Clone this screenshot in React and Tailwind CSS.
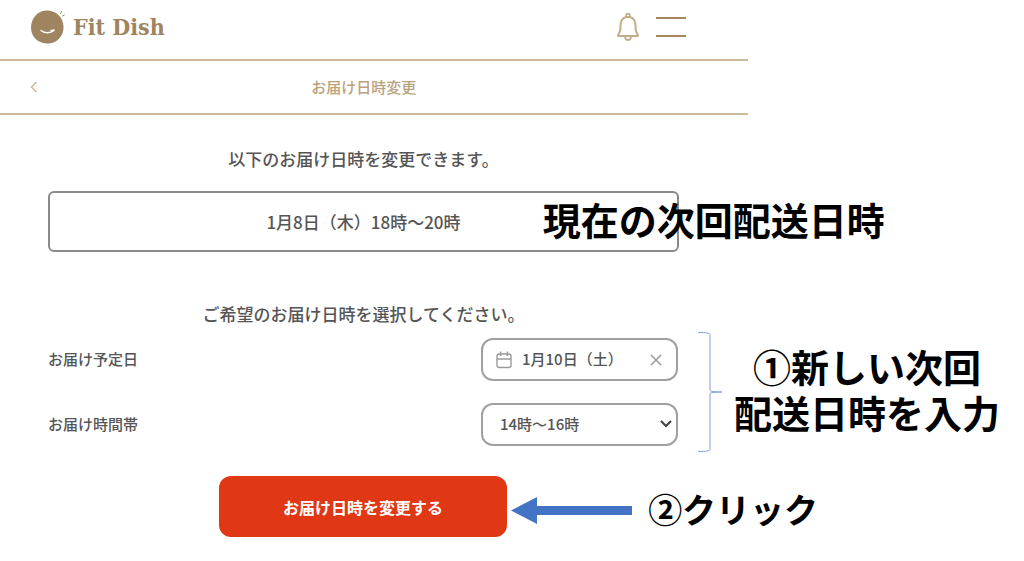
import React, { useState } from "react";

const Logo = () => (
  <a href="#" className="flex items-center gap-2 text-[#9f8460]">
    <svg width="35" height="36" viewBox="0 0 35 36" fill="none" aria-hidden="true">
      <path
        d="M17 1.500C26 1.500 33 8 33.500 17.500c.4 9.500-6.500 17-16 17S1 28 1 18.500 8 1.500 17 1.500Z"
        fill="currentColor"
      />
      <path
        d="M11 21.500c3 3 9.500 3 13 0M21 21.500l3-.5"
        stroke="#fff"
        strokeWidth="1.400"
        strokeLinecap="round"
      />
      <path
        d="m30.500 4.500 1.200-2M32.500 7l1.800-1"
        stroke="currentColor"
        strokeWidth="1"
        strokeLinecap="round"
      />
    </svg>
    <span className="font-['DejaVu_Serif_Condensed','DejaVu_Serif',serif] text-[23px] font-bold leading-8 whitespace-nowrap">
      Fit Dish
    </span>
  </a>
);

const BellIcon = () => (
  <svg width="24" height="30" viewBox="0 0 24 30" fill="none" stroke="#c3ad87" aria-hidden="true">
    <path
      d="M2 24h20c.5-2-1.800-3-2.200-5.500-.5-3 .2-5.500-.8-8.500-1-3.500-3.800-5-7-5s-6 1.500-7 5c-1 3-.3 5.500-.8 8.500C3.800 21 1.500 22 2 24Z"
      strokeWidth="2"
      strokeLinejoin="round"
    />
    <path d="M10.200 5V3.500a1.800 1.800 0 0 1 3.600 0V5M9 25c.3 2 1.500 3 3 3s2.700-1 3-3" strokeWidth="1.800" />
  </svg>
);

const CalendarIcon = () => (
  <svg width="16" height="18" viewBox="0 0 16 18" fill="none" stroke="#9a9a9a" aria-hidden="true">
    <rect x="1" y="3" width="14" height="13.500" rx="2" strokeWidth="1.400" />
    <path d="M1 8h14M4.500.5V5M11.500.5V5" strokeWidth="1.400" />
  </svg>
);

const Bracket = () => (
  <svg
    width="24"
    height="120"
    viewBox="0 0 24 120"
    fill="none"
    stroke="#7f9fd8"
    className="ml-5 shrink-0"
    aria-hidden="true"
  >
    <path d="M0 .6c8 0 12 .4 12 2V58c0 1.500 4 2 12 2-8 0-12 .5-12 2v55.400c0 1.600-4 2-12 2" />
  </svg>
);

const App = () => {
  const [date, setDate] = useState("1月10日（土）");
  const [time, setTime] = useState("14時～16時");

  return (
    <main className="bg-white font-['Noto_Sans_CJK_JP',sans-serif] font-medium text-[#555555]">
      {/* Header */}
      <header className="w-[73%]">
        <div className="flex h-[61px] items-center justify-between border-b-2 border-[#cdbb9c] pb-1.5 pl-[30px] pr-[62px]">
          <Logo />
          <div className="flex items-center gap-4">
            <button type="button" aria-label="お知らせ">
              <BellIcon />
            </button>
            <button type="button" aria-label="メニュー" className="flex w-[30px] flex-col gap-4">
              <span className="h-0.5 bg-[#a58860]"></span>
              <span className="h-0.5 bg-[#a58860]"></span>
            </button>
          </div>
        </div>

        <div className="flex h-[54px] items-center border-b-2 border-[#cdbb9c] pl-[30px] pr-[58px]">
          <a href="#" aria-label="戻る">
            <svg width="8" height="12" viewBox="0 0 8 12" fill="none" stroke="#cbb994" strokeWidth="1.500">
              <path d="M6.500 1 1.500 6l5 5" />
            </svg>
          </a>
          <h1 className="flex-1 text-center text-[15px] leading-6 text-[#b9a27c]">
            お届け日時変更
          </h1>
        </div>
      </header>

      {/* Current delivery */}
      <p className="w-[71%] pt-8 text-center text-[17px] leading-6">
        以下のお届け日時を変更できます。
      </p>
      <div className="relative mt-5">
        <div className="w-[66.3%] pl-12">
          <p className="flex h-[61px] items-center justify-center rounded-md border-2 border-[#8a8a8a] text-[17px]">
            1月8日（木）18時～20時
          </p>
        </div>
        <p className="absolute inset-y-0 left-[53%] flex items-center whitespace-nowrap font-['Liberation_Sans','Noto_Sans_CJK_JP',sans-serif] text-[38px] font-bold leading-[46px] text-black">
          現在の次回配送日時
        </p>
      </div>

      {/* New delivery */}
      <form onSubmit={(e) => e.preventDefault()}>
        <p className="mt-[50px] w-[71%] text-center text-[17px] leading-6">
          ご希望のお届け日時を選択してください。
        </p>

        <div className="mt-1.5 flex items-center">
          <div className="flex w-[66.3%] flex-col gap-[22px] pl-12 text-[15px]">
            <div className="flex items-center justify-between">
              <label htmlFor="date">お届け予定日</label>
              <div className="flex h-[43px] w-[197px] items-center gap-2.5 rounded-xl border-2 border-[#a0a0a0] pl-[13px] pr-2.5">
                <CalendarIcon />
                <input
                  id="date"
                  type="text"
                  value={date}
                  onChange={(e) => setDate(e.target.value)}
                  className="min-w-0 flex-1 outline-none"
                />
                <button type="button" aria-label="クリア" className="px-1" onClick={() => setDate("")}>
                  <svg width="12" height="12" viewBox="0 0 12 12" stroke="#9a9a9a" strokeWidth="1.500">
                    <path d="m1 1 10 10M11 1 1 11" />
                  </svg>
                </button>
              </div>
            </div>

            <div className="flex items-center justify-between">
              <label htmlFor="time">お届け時間帯</label>
              <div className="relative w-[197px]">
                <select
                  id="time"
                  value={time}
                  onChange={(e) => setTime(e.target.value)}
                  className="h-[43px] w-full appearance-none rounded-xl border-2 border-[#a0a0a0] px-[17px]"
                >
                  <option>14時～16時</option>
                  <option>16時～18時</option>
                  <option>18時～20時</option>
                </select>
                <svg
                  width="12"
                  height="8"
                  viewBox="0 0 12 8"
                  fill="none"
                  stroke="#444"
                  strokeWidth="2.200"
                  className="pointer-events-none absolute right-1.5 top-[17px]"
                >
                  <path d="m1 1 5 5 5-5" />
                </svg>
              </div>
            </div>
          </div>

          <Bracket />
          <p className="flex-1 whitespace-nowrap pl-3 pr-6 text-center font-['Liberation_Sans','Noto_Sans_CJK_JP',sans-serif] text-[38px] font-bold leading-[46px] text-black">
            ①新しい次回
            <br />
            配送日時を入力
          </p>
        </div>

        <div className="mt-6 flex items-center pl-[21.4%]">
          <button
            type="submit"
            className="h-[61px] w-[288px] shrink-0 rounded-xl bg-[#e03714] text-base font-bold text-white"
          >
            お届け日時を変更する
          </button>
          <div className="flex items-center gap-4 pl-1 pt-2">
            <svg width="121" height="27" viewBox="0 0 121 27" fill="#4472c4" aria-hidden="true">
              <path d="M0 13.500 26 0v9h95v9H26v9Z" />
            </svg>
            <p className="whitespace-nowrap font-['Liberation_Sans','Noto_Sans_CJK_JP',sans-serif] text-[34px] font-bold leading-[46px] text-black">
              ②クリック
            </p>
          </div>
        </div>
      </form>
    </main>
  );
};

export default App;
